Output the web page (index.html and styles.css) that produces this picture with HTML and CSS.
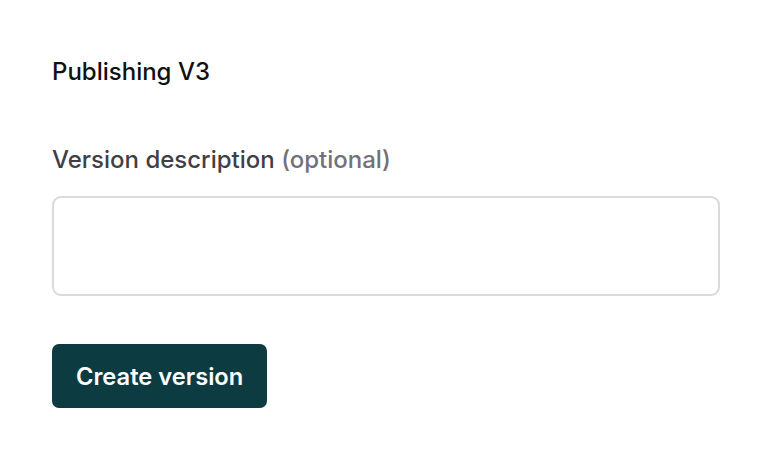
FILE: index.html
```html
<!DOCTYPE html>
<html>
<head>
<meta charset="utf-8">
<link rel="stylesheet" href="styles.css">
</head>
<body>
<div class="panel">
  <h2 class="title">Publishing V3</h2>
  <label class="label" for="desc">Version description <span class="opt">(optional)</span></label>
  <textarea id="desc" class="input"></textarea>
  <button class="btn">Create version</button>
</div>
</body>
</html>
```
FILE: styles.css
```css
html, body { margin: 0; padding: 0; background: #fff; }
body { font-family: Inter, "Noto Sans", sans-serif; color: #18181b; }
.panel {
  display: flex;
  flex-direction: column;
  align-items: flex-start;
  padding: 57px 53px 0 52px;
}
.title {
  margin: 0;
  font-size: 24px;
  font-weight: 500;
  line-height: 30px;
  color: #111;
}
.label {
  margin-top: 58px;
  font-size: 24px;
  font-weight: 500;
  line-height: 30px;
  color: #3f3f46;
}
.opt { color: #71717a; }
.input {
  box-sizing: border-box;
  margin-top: 21px;
  width: 668px;
  height: 100px;
  border: 2px solid #d9d9de;
  border-radius: 9px;
  resize: none;
  outline: none;
  padding: 0;
}
.btn {
  margin-top: 48px;
  height: 64px;
  padding: 0 24px;
  background: #0d3b42;
  color: #fff;
  border: none;
  border-radius: 7px;
  font-family: Inter, sans-serif;
  font-size: 23.7px;
  font-weight: 600;
}
```
